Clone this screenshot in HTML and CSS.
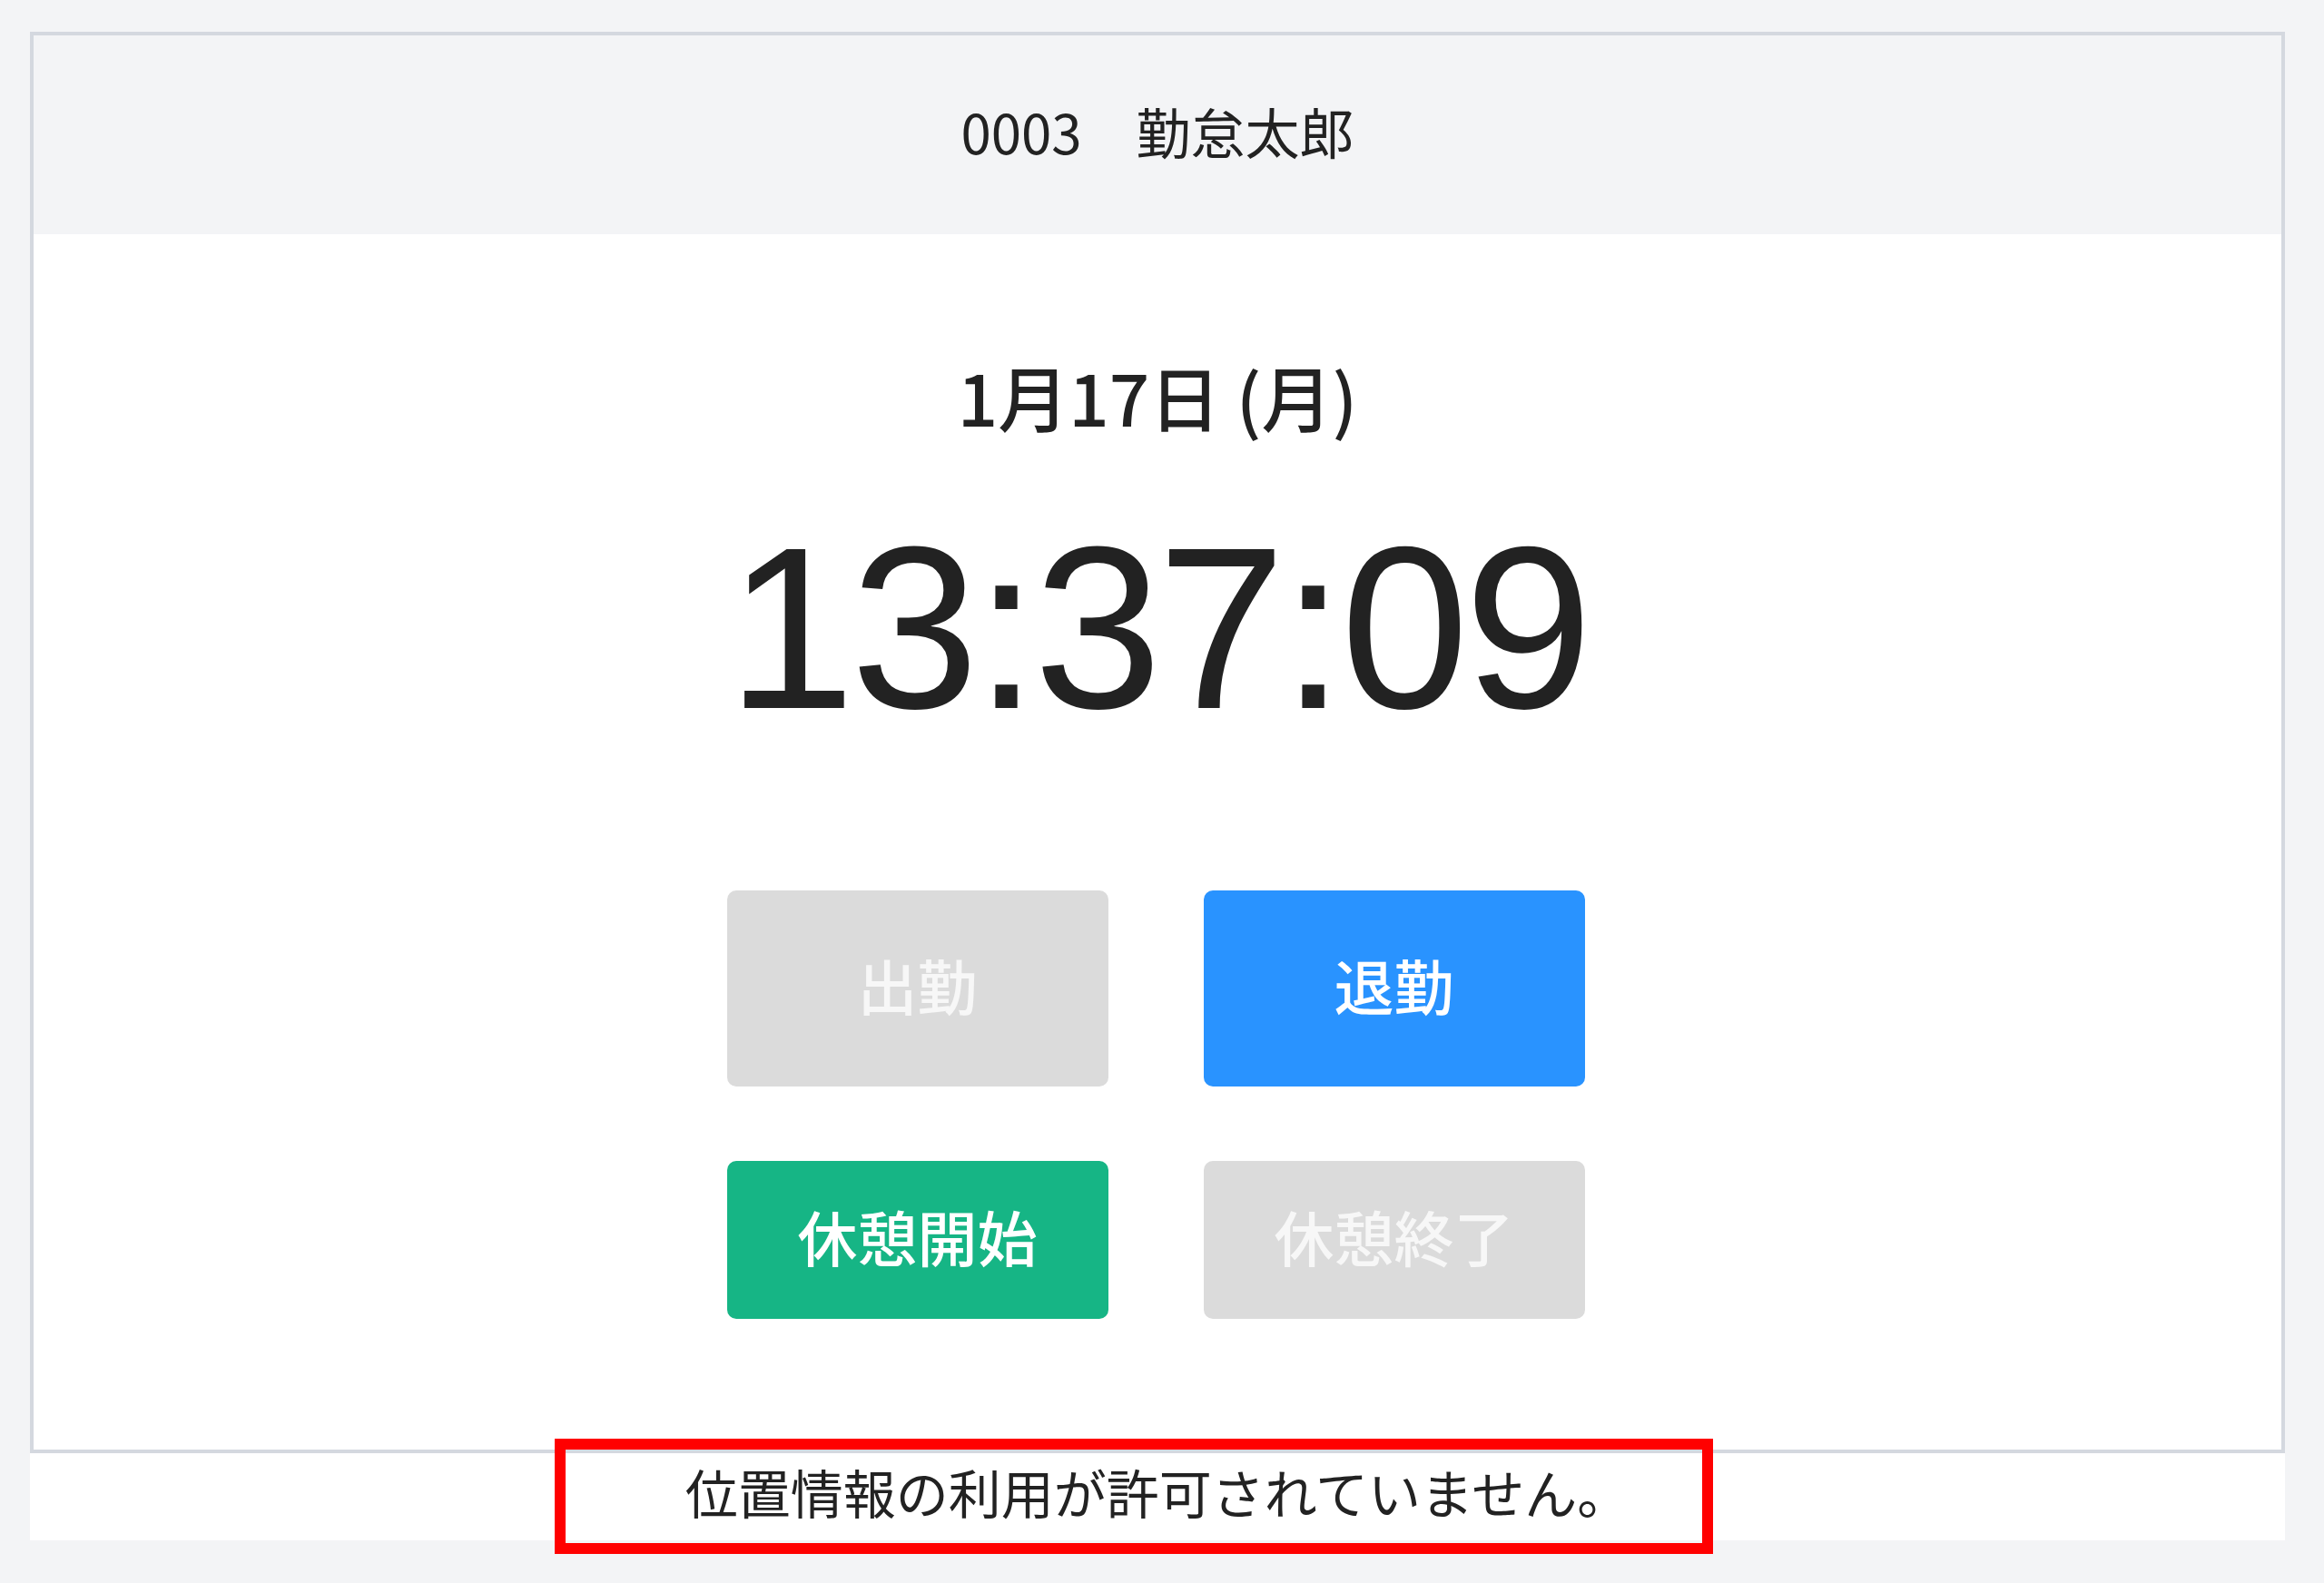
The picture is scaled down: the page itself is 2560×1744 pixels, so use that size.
FILE: index.html
```html
<!DOCTYPE html>
<html lang="ja">
<head>
  <meta charset="UTF-8" />
  <title>打刻</title>
  <link rel="stylesheet" href="styles.css">
</head>
<body>

  <div class="page">
    <div class="card">
      <div class="card-header">0003　勤怠太郎</div>

      <div class="card-body">
        <div class="date">1月17日 (月)</div>
        <div class="clock">13:37:09</div>

        <div class="buttons">
          <button class="btn btn-tall btn-off" disabled>出勤</button>
          <button class="btn btn-tall btn-blue">退勤</button>
          <button class="btn btn-short btn-green">休憩開始</button>
          <button class="btn btn-short btn-off" disabled>休憩終了</button>
        </div>
      </div>
    </div>

    <div class="message">
      位置情報の利用が許可されていません。
      <div class="highlight"></div>
    </div>
  </div>

</body>
</html>
```

FILE: styles.css
```css
* {
  box-sizing: border-box;
}

body {
  margin: 0;
  background-color: #f3f4f6;
  font-family: "Noto Sans CJK JP", "Noto Sans", sans-serif;
  color: #222;
}

.page {
  padding: 35px 43px 47px 33px;
}

.card {
  border: 4px solid #d4d8df;
  background-color: #fff;
}

.card-header {
  height: 219px;
  padding-bottom: 10px;
  display: flex;
  align-items: center;
  justify-content: center;
  background-color: #f3f4f6;
  font-size: 60px;
}

.card-body {
  padding: 128px 0 144px;
  display: flex;
  flex-direction: column;
  align-items: center;
}

.date {
  height: 100px;
  line-height: 100px;
  font-size: 78px;
  font-weight: 500;
}

.clock {
  margin-top: 61px;
  height: 290px;
  line-height: 290px;
  font-family: "Liberation Sans", Arial, sans-serif;
  font-size: 254px;
  letter-spacing: -5px;
  color: #222;
}

.buttons {
  margin-top: 144px;
  margin-left: -4px;
  display: grid;
  grid-template-columns: 420px 420px;
  grid-template-rows: 216px 174px;
  column-gap: 105px;
  row-gap: 82px;
}

.btn {
  border: none;
  border-radius: 10px;
  padding: 0 0 10px;
  font-family: "Noto Sans CJK JP", sans-serif;
  font-size: 66px;
  font-weight: 500;
  color: #fff;
  cursor: pointer;
}

.btn-off {
  background-color: #dbdbdb;
  color: #f7f7f7;
  cursor: default;
}

.btn-blue {
  background-color: #2993ff;
}

.btn-green {
  background-color: #16b585;
}

.message {
  position: relative;
  height: 96px;
  padding-bottom: 12px;
  display: flex;
  align-items: center;
  justify-content: center;
  background-color: #fff;
  font-size: 58px;
}

/* red annotation frame */
.highlight {
  position: absolute;
  left: 578px;
  top: -16px;
  width: 1276px;
  height: 127px;
  border: 12px solid #ff0000;
}
```
